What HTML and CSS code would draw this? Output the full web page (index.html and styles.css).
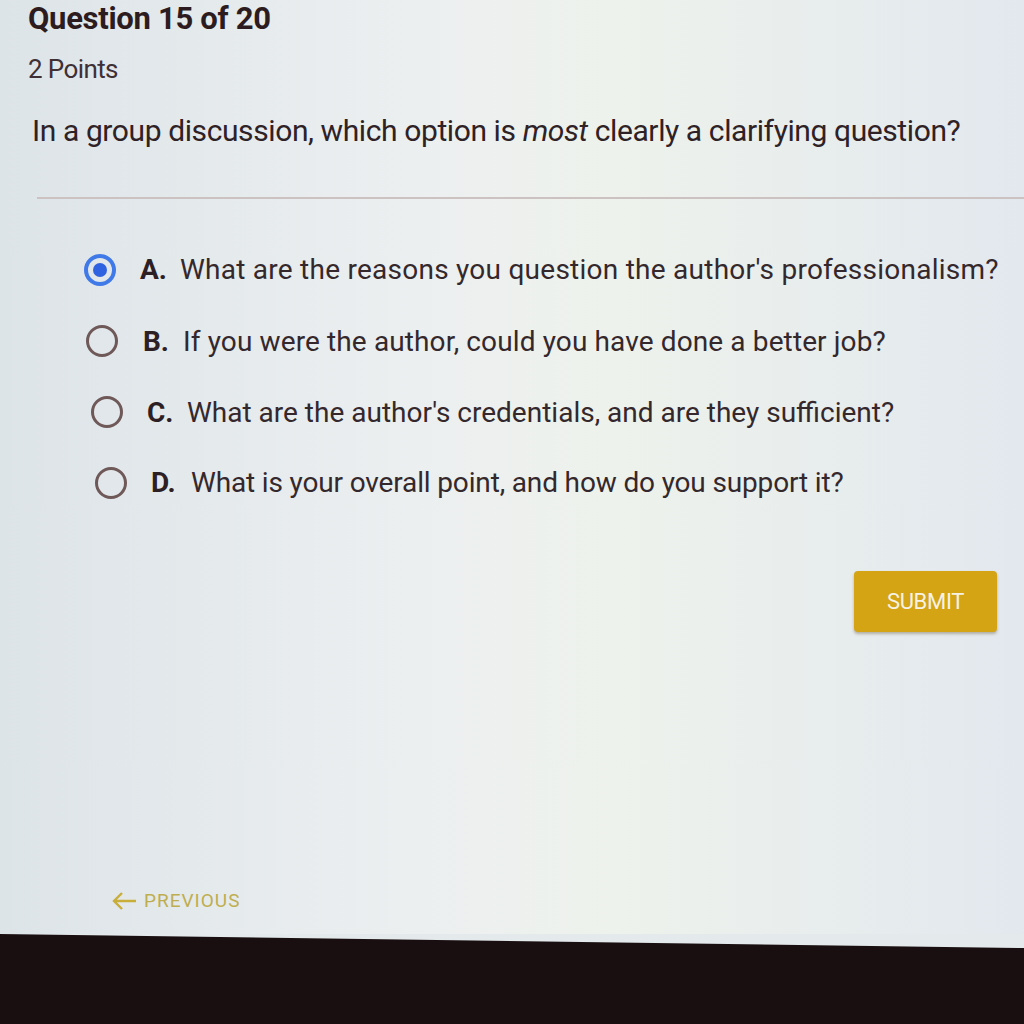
FILE: index.html
```html
<!DOCTYPE html>
<html>
<head>
<meta charset="utf-8">
<link rel="stylesheet" href="styles.css">
</head>
<body>
<div class="screen">
  <header class="head">
    <h1 class="title">Question 15 of 20</h1>
    <div class="points">2 Points</div>
    <p class="question">In a group discussion, which option is <em>most</em> clearly a clarifying question?</p>
  </header>
  <div class="rule"></div>
  <ul class="options">
    <li class="opt opt-a"><span class="radio checked"></span><b>A.</b><span class="txt">What are the reasons you question the author's professionalism?</span></li>
    <li class="opt opt-b"><span class="radio"></span><b>B.</b><span class="txt">If you were the author, could you have done a better job?</span></li>
    <li class="opt opt-c"><span class="radio"></span><b>C.</b><span class="txt">What are the author's credentials, and are they sufficient?</span></li>
    <li class="opt opt-d"><span class="radio"></span><b>D.</b><span class="txt">What is your overall point, and how do you support it?</span></li>
  </ul>
  <div class="actions">
    <button class="submit">SUBMIT</button>
  </div>
  <div class="prev">
    <svg class="arrow" width="26" height="20" viewBox="0 0 26 20"><path d="M25 10H3M11 2L3 10l8 8" fill="none" stroke="#c9ae3a" stroke-width="2.4"/></svg>
    <span>PREVIOUS</span>
  </div>
</div>
<div class="bezel"></div>
</body>
</html>
```
FILE: styles.css
```css
html, body {
  margin: 0;
  padding: 0;
}
body {
  width: 1024px;
  height: 1024px;
  overflow: hidden;
  background: #e4e9ec;
  font-family: Roboto, "Liberation Sans", sans-serif;
  color: #3a2a2a;
}
.screen {
  height: 934px;
  background: linear-gradient(90deg, #dde4e8 0%, #eceff0 40%, #eef2ec 60%, #e2e8ee 100%);
  display: flex;
  flex-direction: column;
}
.head {
  padding: 0 0 0 28px;
}
.title {
  margin: 0;
  padding-top: 2px;
  font-size: 31px;
  font-weight: 700;
  color: #2c1c20;
  letter-spacing: -0.3px;
  line-height: 34px;
}
.points {
  margin-top: 18px;
  font-size: 26px;
  line-height: 30px;
  letter-spacing: -0.6px;
  color: #3e3034;
}
.question {
  margin: 30px 0 0 4px;
  font-size: 30px;
  line-height: 34px;
  letter-spacing: -0.4px;
  color: #2e2226;
}
.question em {
  font-style: italic;
}
.rule {
  margin: 49px 0 0 37px;
  height: 2px;
  background: #cdc2c2;
}
.options {
  list-style: none;
  margin: 35px 0 0 0;
  padding: 0;
}
.opt {
  display: flex;
  align-items: center;
  height: 71px;
  font-size: 28px;
  color: #34282c;
  padding-left: 84px;
}
.opt-a .txt { letter-spacing: 0.25px; }
.opt-b { padding-left: 86px; height: 72px; }
.opt-b .txt { letter-spacing: 0.12px; }
.opt-c { padding-left: 91px; height: 70px; }
.opt-d { padding-left: 95px; }
.opt-d .txt { letter-spacing: -0.15px; }
.opt b {
  font-weight: 700;
  margin-left: 24px;
  width: 40px;
  color: #2c2024;
}
.opt-b b { margin-left: 25px; }
.radio {
  box-sizing: border-box;
  width: 32px;
  height: 32px;
  border-radius: 50%;
  border: 3px solid #6e5858;
  position: relative;
  flex: none;
}
.radio.checked {
  border: 4px solid #4079e8;
}
.radio.checked::after {
  content: "";
  position: absolute;
  left: 5px;
  top: 5px;
  width: 14px;
  height: 14px;
  border-radius: 50%;
  background: #2f62e0;
}
.actions {
  display: flex;
  justify-content: flex-end;
  padding-right: 27px;
  margin-top: 53px;
}
.submit {
  width: 143px;
  height: 61px;
  border: none;
  border-radius: 4px;
  background: #d4a414;
  color: #f6f2e6;
  font-family: Roboto, "Liberation Sans", sans-serif;
  font-size: 22px;
  font-weight: 400;
  letter-spacing: -0.3px;
  box-shadow: 0 2px 3px rgba(80,60,20,0.35);
}
.prev {
  margin-top: auto;
  margin-bottom: 22px;
  margin-left: 111px;
  display: flex;
  align-items: center;
  gap: 7px;
  color: #bfae50;
  font-size: 19px;
  letter-spacing: 1px;
}
.bezel {
  height: 90px;
  background: #190f10;
  clip-path: polygon(0 0, 100% 14px, 100% 100%, 0 100%);
}
```
